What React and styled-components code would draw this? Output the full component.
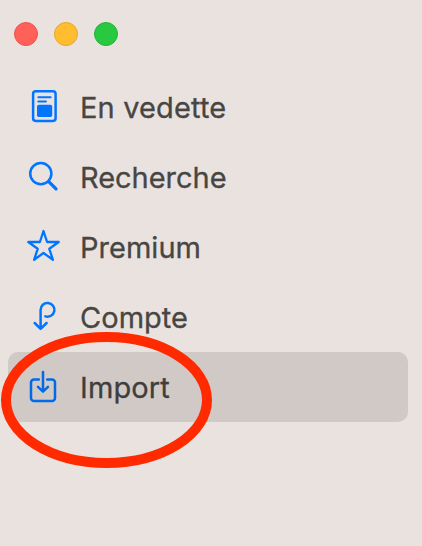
import React from 'react';
import styled, { createGlobalStyle } from 'styled-components';

const items = [
  { text: 'En vedette', icon: <FeaturedIcon />, spacing: '0.15px' },
  { text: 'Recherche', icon: <SearchIcon />, spacing: '-0.03px' },
  { text: 'Premium', icon: <StarIcon />, spacing: '0.02px' },
  { text: 'Compte', icon: <AccountIcon />, spacing: '0.03px' },
  { text: 'Import', icon: <ImportIcon />, spacing: '0.1px', active: true },
];

function App() {
  return (
    <>
      <GlobalStyle />
      <Sidebar>
        <WindowButtons>
          <WindowButton $color="#ff6058" $border="#ee544e" />
          <WindowButton $color="#ffbd2f" $border="#e6a82a" />
          <WindowButton $color="#28c940" $border="#20b435" />
        </WindowButtons>
        <Menu>
          {items.map((item) => (
            <MenuItem key={item.text} $active={item.active}>
              <Icon viewBox="0 0 40 40" $active={item.active}>{item.icon}</Icon>
              <Label $spacing={item.spacing}>{item.text}</Label>
            </MenuItem>
          ))}
        </Menu>
        <Highlight viewBox="0 0 212 138">
          <ellipse cx="106.5" cy="69" rx="100.5" ry="63" />
        </Highlight>
      </Sidebar>
    </>
  );
}

export default App;

function FeaturedIcon() {
  return (
    <>
      <rect x="9.1" y="4.3" width="22.5" height="29.6" rx="2.6" />
      <path d="M14.3 10.2H26.7M14.3 14.5H22" strokeWidth="1.9" />
      <rect x="13" y="17.7" width="15.2" height="12.4" rx="1.8" fill="currentColor" stroke="none" />
    </>
  );
}

function SearchIcon() {
  return (
    <>
      <circle cx="16.8" cy="16.6" r="10.6" />
      <path d="M25 24.8L32 31.9" strokeWidth="3.3" />
    </>
  );
}

function StarIcon() {
  return (
    <path
      d="M19.5 4L23.1 15H34.7L25.3 21.8L28.9 32.8L19.5 26L10.1 32.8L13.7 21.8L4.3 15H15.9Z"
      strokeWidth="2.3"
    />
  );
}

function AccountIcon() {
  return (
    <path d="M16.6 31.7V12.9A6.9 6.9 0 1 1 21.4 19.4M10.7 26L16.6 31.9L22.6 26" />
  );
}

function ImportIcon() {
  return (
    <path d="M14.8 12.6H10A3 3 0 0 0 7 15.6V30.9A3 3 0 0 0 10 33.9H28A3 3 0 0 0 31 30.9V15.6A3 3 0 0 0 28 12.6H23.2M19 5V24.3M14 19.9L19 24.7L24 19.9" />
  );
}

const GlobalStyle = createGlobalStyle`
  * {
    box-sizing: border-box;
  }

  body {
    margin: 0;
    background: #eae2df;
    font-family: Inter, "Liberation Sans", sans-serif;
  }
`;

const Sidebar = styled.aside`
  position: relative;
  height: 546px;
  overflow: hidden;
  background: #eae2df;
`;

const WindowButtons = styled.div`
  display: flex;
  gap: 16px;
  height: 72px;
  padding: 22px 14px 0;
`;

const WindowButton = styled.span`
  width: 24px;
  height: 24px;
  border-radius: 50%;
  border: 1px solid ${(props) => props.$border};
  background: ${(props) => props.$color};
`;

const Menu = styled.nav`
  display: flex;
  flex-direction: column;
  padding: 0 14px 0 8px;
`;

const MenuItem = styled.div`
  display: flex;
  align-items: center;
  gap: 16px;
  height: 70px;
  padding-left: 16px;
  border-radius: 10px;
  color: ${(props) => (props.$active ? '#403e3c' : '#474643')};
  background: ${(props) => (props.$active ? '#d1c9c6' : 'transparent')};
`;

const Icon = styled.svg`
  flex: none;
  width: 40px;
  height: 40px;
  color: ${(props) => (props.$active ? '#006ae8' : '#0075ff')};
  fill: none;
  stroke: currentColor;
  stroke-width: 2.5;
  stroke-linecap: round;
  stroke-linejoin: round;
`;

const Label = styled.span`
  padding-top: 2px;
  font-size: 29px;
  line-height: 40px;
  letter-spacing: ${(props) => props.$spacing};
  -webkit-text-stroke: 0.3px currentColor;
`;

const Highlight = styled.svg`
  position: absolute;
  top: 331px;
  left: 0;
  width: 212px;
  height: 138px;
  overflow: visible;
  fill: none;
  stroke: #ff2a00;
  stroke-width: 10;
`;
